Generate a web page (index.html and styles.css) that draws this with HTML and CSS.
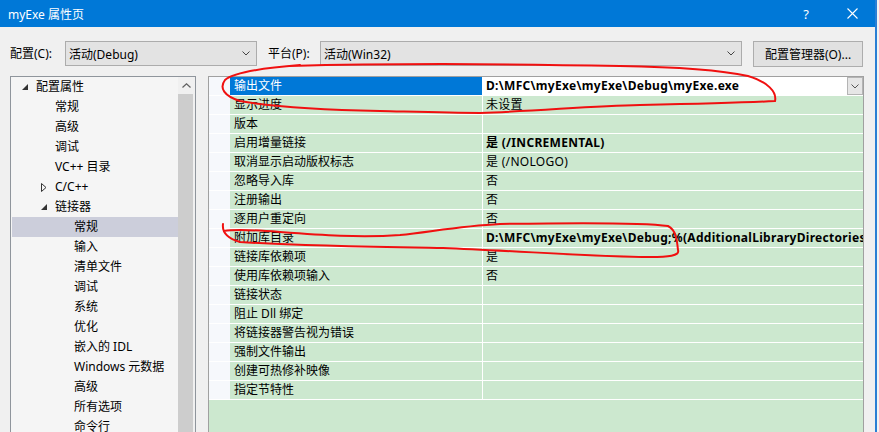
FILE: index.html
```html
<!DOCTYPE html>
<html lang="zh-CN">
<head>
  <meta charset="UTF-8" />
  <title>myExe 属性页</title>
  <link rel="stylesheet" href="styles.css">
</head>
<body>

  <div class="window">
    <!-- TITLE BAR -->
    <div class="title-bar">
      <span class="title">myExe 属性页</span>
      <span class="caption-btn help">?</span>
      <span class="caption-btn close">
        <svg width="11" height="11" viewBox="0 0 11 11"><path d="M0.5 0.5 L10.5 10.5 M10.5 0.5 L0.5 10.5" stroke="#fff" stroke-width="1.1" fill="none"/></svg>
      </span>
    </div>

    <!-- CONFIG / PLATFORM -->
    <div class="toolbar">
      <label class="tool-label config-label">配置(C):</label>
      <div class="combo config-combo">
        <span>活动(Debug)</span>
        <svg width="8" height="5" viewBox="0 0 8 5"><path d="M0.5 0.5 L4 4 L7.5 0.5" stroke="#444" fill="none"/></svg>
      </div>
      <label class="tool-label platform-label">平台(P):</label>
      <div class="combo platform-combo">
        <span>活动(Win32)</span>
        <svg width="8" height="5" viewBox="0 0 8 5"><path d="M0.5 0.5 L4 4 L7.5 0.5" stroke="#444" fill="none"/></svg>
      </div>
      <button class="config-manager">配置管理器(O)...</button>
    </div>

    <div class="main">
      <!-- TREE -->
      <div class="tree">
        <ul class="tree-list">
          <li class="lvl-0"><span class="arrow"><svg width="6" height="6" viewBox="0 0 6 6"><path d="M6 0 L6 6 L0 6 Z" fill="#333"/></svg></span>配置属性</li>
          <li class="lvl-1"><span class="arrow"></span>常规</li>
          <li class="lvl-1"><span class="arrow"></span>高级</li>
          <li class="lvl-1"><span class="arrow"></span>调试</li>
          <li class="lvl-1"><span class="arrow"></span>VC++ 目录</li>
          <li class="lvl-1"><span class="arrow"><svg width="6" height="9" viewBox="0 0 6 9"><path d="M0.5 0.5 L5 4.5 L0.5 8.5 Z" stroke="#333" fill="none"/></svg></span>C/C++</li>
          <li class="lvl-1"><span class="arrow"><svg width="6" height="6" viewBox="0 0 6 6"><path d="M6 0 L6 6 L0 6 Z" fill="#333"/></svg></span>链接器</li>
          <li class="lvl-2 selected"><span class="arrow"></span>常规</li>
          <li class="lvl-2"><span class="arrow"></span>输入</li>
          <li class="lvl-2"><span class="arrow"></span>清单文件</li>
          <li class="lvl-2"><span class="arrow"></span>调试</li>
          <li class="lvl-2"><span class="arrow"></span>系统</li>
          <li class="lvl-2"><span class="arrow"></span>优化</li>
          <li class="lvl-2"><span class="arrow"></span>嵌入的 IDL</li>
          <li class="lvl-2"><span class="arrow"></span>Windows 元数据</li>
          <li class="lvl-2"><span class="arrow"></span>高级</li>
          <li class="lvl-2"><span class="arrow"></span>所有选项</li>
          <li class="lvl-2"><span class="arrow"></span>命令行</li>
        </ul>
        <div class="vscroll">
          <div class="scroll-up">
            <svg width="9" height="5" viewBox="0 0 9 5"><path d="M0.5 4.5 L4.5 0.8 L8.5 4.5" stroke="#606060" stroke-width="1.2" fill="none"/></svg>
          </div>
          <div class="scroll-thumb"></div>
        </div>
      </div>

      <!-- PROPERTY GRID -->
      <div class="grid">
        <div class="row selected">
          <span class="margin"></span>
          <span class="name">输出文件</span>
          <span class="value bold">D:\MFC\myExe\myExe\Debug\myExe.exe</span>
          <span class="drop">
            <svg width="8" height="5" viewBox="0 0 8 5"><path d="M0.5 0.5 L4 4 L7.5 0.5" stroke="#555" fill="none"/></svg>
          </span>
        </div>
        <div class="row"><span class="margin"></span><span class="name">显示进度</span><span class="value">未设置</span></div>
        <div class="row"><span class="margin"></span><span class="name">版本</span><span class="value"></span></div>
        <div class="row"><span class="margin"></span><span class="name">启用增量链接</span><span class="value bold">是 (/INCREMENTAL)</span></div>
        <div class="row"><span class="margin"></span><span class="name">取消显示启动版权标志</span><span class="value">是 (/NOLOGO)</span></div>
        <div class="row"><span class="margin"></span><span class="name">忽略导入库</span><span class="value">否</span></div>
        <div class="row"><span class="margin"></span><span class="name">注册输出</span><span class="value">否</span></div>
        <div class="row"><span class="margin"></span><span class="name">逐用户重定向</span><span class="value">否</span></div>
        <div class="row"><span class="margin"></span><span class="name">附加库目录</span><span class="value bold">D:\MFC\myExe\myExe\Debug;%(AdditionalLibraryDirectories)</span></div>
        <div class="row"><span class="margin"></span><span class="name">链接库依赖项</span><span class="value">是</span></div>
        <div class="row"><span class="margin"></span><span class="name">使用库依赖项输入</span><span class="value">否</span></div>
        <div class="row"><span class="margin"></span><span class="name">链接状态</span><span class="value"></span></div>
        <div class="row"><span class="margin"></span><span class="name">阻止 Dll 绑定</span><span class="value"></span></div>
        <div class="row"><span class="margin"></span><span class="name">将链接器警告视为错误</span><span class="value"></span></div>
        <div class="row"><span class="margin"></span><span class="name">强制文件输出</span><span class="value"></span></div>
        <div class="row"><span class="margin"></span><span class="name">创建可热修补映像</span><span class="value"></span></div>
        <div class="row"><span class="margin"></span><span class="name">指定节特性</span><span class="value"></span></div>
      </div>
    </div>
  </div>

  <!-- red pen marks drawn over the screenshot -->
  <svg class="ink" width="879" height="432" viewBox="0 0 879 432">
    <path d="M300 65 C262 68 234 72 225 80 C219 88 224 96 240 101 C280 108 330 110 380 111 C420 112 450 113 480 113 C540 111 590 106 640 105 C690 104 740 103 775 101 C777 92 768 82 748 76 C720 70 680 67 620 66 C520 64 400 63 290 66"/>
    <path d="M223 224 C222 232 226 238 240 242 C300 246 380 247 443 248 C520 251 600 257 650 257 C668 257 680 256 678 250 C677 240 676 230 668 226 C640 222 560 223 500 224 C460 226 430 232 400 235 C360 238 320 235 280 232 C255 230 235 229 224 231"/>
  </svg>

</body>
</html>
```

FILE: styles.css
```css
/* ---------------------------------------------
   GENERAL
--------------------------------------------- */
* {
  margin: 0;
  padding: 0;
  box-sizing: border-box;
}

html,
body {
  height: 100%;
  overflow: hidden;
}

body {
  position: relative;
  background: #f3f3f3;
  font-family: "Noto Sans", "Noto Sans CJK SC", sans-serif;
  font-size: 12px;
  color: #000;
}

.window {
  width: 877px;
  height: 432px;
  background: #f0f0f0;
  border-right: 2px solid #2a7fd4;
  overflow: hidden;
}

/* ---------------------------------------------
   TITLE BAR
--------------------------------------------- */
.title-bar {
  height: 27px;
  background: #0078d7;
  color: #fff;
  display: flex;
  align-items: center;
  padding-left: 8px;
}
.title-bar .title {
  flex: 1;
}
.caption-btn {
  width: 46px;
  height: 27px;
  display: flex;
  align-items: center;
  justify-content: center;
}
.help {
  font-size: 13px;
}

/* ---------------------------------------------
   TOOLBAR (config + platform)
--------------------------------------------- */
.toolbar {
  height: 49px;
  display: flex;
  align-items: flex-start;
  padding: 14px 0 0 10px;
}
.tool-label {
  line-height: 25px;
}
.config-label {
  width: 55px;
}
.platform-label {
  width: 52px;
  margin-left: 11px;
}
.combo {
  height: 25px;
  background: #e3e3e3;
  border: 1px solid #acacac;
  display: flex;
  align-items: center;
  justify-content: space-between;
  padding: 0 6px 0 3px;
}
.config-combo {
  width: 192px;
}
.platform-combo {
  width: 422px;
}
.config-manager {
  width: 110px;
  height: 26px;
  margin-left: 11px;
  background: #e1e1e1;
  border: 1px solid #adadad;
  font-family: inherit;
  font-size: 12px;
  color: #000;
}

/* ---------------------------------------------
   MAIN AREA
--------------------------------------------- */
.main {
  display: flex;
  gap: 12px;
  padding-left: 10px;
  height: 360px;
}

/* Tree on the left */
.tree {
  width: 186px;
  border: 1px solid #8f959c;
  background: #f5f5f5;
  display: flex;
}
.tree-list {
  flex: 1;
  list-style: none;
}
.tree-list li {
  height: 20px;
  line-height: 20px;
  display: flex;
  align-items: center;
  white-space: nowrap;
}
.tree-list .arrow {
  width: 14px;
  height: 20px;
  display: flex;
  align-items: center;
}
.lvl-0 { padding-left: 11px; }
.lvl-1 { padding-left: 30px; }
.lvl-2 { padding-left: 49px; }
.tree-list li.selected {
  background: #cccedb;
  margin-left: 1px;
  padding-left: 48px;
}

.vscroll {
  width: 17px;
  background: #f0f0f0;
  display: flex;
  flex-direction: column;
}
.scroll-up {
  height: 17px;
  display: flex;
  align-items: center;
  justify-content: center;
}
.scroll-thumb {
  flex: 1;
  margin: 0 2px 0 0;
  background: #cdcdcd;
}

/* Property grid on the right */
.grid {
  width: 656px;
  border: 1px solid #a0a0a0;
  background: #cce8cf;
}
.row {
  display: flex;
  height: 19px;
  border-bottom: 1px solid #fff;
}
.row .margin {
  width: 21px;
  background: #f6f8fc;
}
.row .name {
  width: 253px;
  padding-left: 4px;
  line-height: 18px;
  border-right: 1px solid #fff;
  white-space: nowrap;
}
.row .value {
  flex: 1;
  padding-left: 3px;
  line-height: 18px;
  white-space: nowrap;
  overflow: hidden;
  letter-spacing: 0.3px;
}
.bold {
  font-weight: bold;
}
.row.selected .name {
  background: #0078d7;
  color: #fff;
}
.row.selected .value {
  background: #fff;
}
.row.selected .drop {
  width: 16px;
  background: #e6e6e6;
  border: 1px solid #b4b4b4;
  display: flex;
  align-items: center;
  justify-content: center;
}

/* ---------------------------------------------
   RED PEN MARKS
--------------------------------------------- */
.ink {
  position: absolute;
  top: 0;
  left: 0;
  pointer-events: none;
}
.ink path {
  fill: none;
  stroke: #f01010;
  stroke-width: 2;
  stroke-linecap: round;
}
```
